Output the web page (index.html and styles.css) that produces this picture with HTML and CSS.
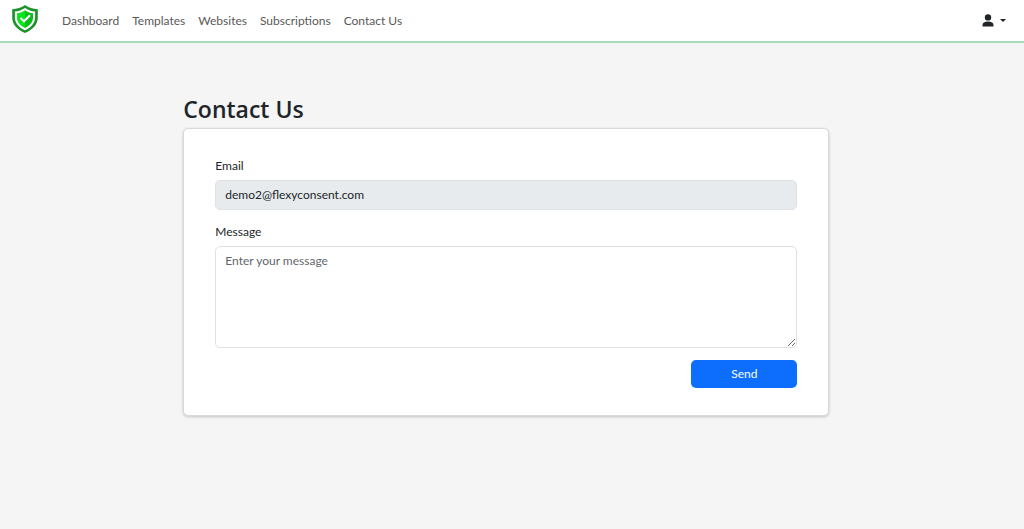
FILE: index.html
```html
<!DOCTYPE html>
<html lang="en">
<head>
<meta charset="utf-8">
<meta name="viewport" content="width=device-width, initial-scale=1">
<title>Contact Us</title>
<link rel="stylesheet" href="styles.css">
</head>
<body>
<header class="navbar">
  <a class="brand" href="#" aria-label="Home">
    <svg class="logo" viewBox="0 0 28 30" aria-hidden="true">
      <path d="M14 1C10.500 3.700 6 5 1.200 5.200V13.500C1.200 20.500 6.500 26 14 29C21.500 26 26.800 20.500 26.800 13.500V5.200C22 5 17.500 3.700 14 1Z" fill="#1d922b"/>
      <path d="M14 4C11 6 7.500 7.200 3.900 7.600V13.500C3.900 19 8 23.600 14 26.200C20 23.600 24.100 19 24.100 13.500V7.600C20.500 7.200 17 6 14 4Z" fill="#fff"/>
      <path d="M14 6.200C11.500 7.900 9 8.900 6 9.300V13.500C6 18 9 21.700 14 24Z" fill="#08e51b"/>
      <path d="M14 6.200C16.500 7.900 19 8.900 22 9.300V13.500C22 18 19 21.700 14 24Z" fill="#08bd19"/>
      <path d="M9.500 14L13 17.300L19 11.300" fill="none" stroke="#fff" stroke-width="2"/>
    </svg>
  </a>
  <nav class="nav-links" aria-label="Main">
    <a href="#">Dashboard</a>
    <a href="#">Templates</a>
    <a href="#">Websites</a>
    <a href="#">Subscriptions</a>
    <a href="#">Contact Us</a>
  </nav>
  <button class="account" type="button" aria-label="Account menu">
    <svg class="person" viewBox="0 0 12 13" aria-hidden="true">
      <circle cx="6" cy="3.400" r="3.200"/>
      <path d="M.5 12.500V11C.5 8.800 2.500 7.600 6 7.600S11.500 8.800 11.500 11V12.500Z"/>
    </svg>
    <span class="caret"></span>
  </button>
</header>
<main class="content">
  <h1 class="title">Contact Us</h1>
  <form class="card">
    <div class="field">
      <label for="email">Email</label>
      <input class="control" id="email" type="email" value="demo2@flexyconsent.com" readonly>
    </div>
    <div class="field">
      <label for="message">Message</label>
      <textarea class="control message" id="message" placeholder="Enter your message"></textarea>
    </div>
    <button class="send" type="button">Send</button>
  </form>
</main>
</body>
</html>
```
FILE: styles.css
```css
* {
  box-sizing: border-box;
}

body {
  margin: 0;
  background: #f5f5f5;
  color: #212529;
  font-family: "Segoe UI", Lato, sans-serif;
  font-size: 12px;
  line-height: 20px;
}

.navbar {
  display: flex;
  align-items: center;
  min-height: 43px;
  padding: 0 18px 4px 11px;
  background: #fff;
  border-bottom: 2px solid #a9dbb8;
}

.brand,
.logo {
  display: block;
}

.logo {
  width: 28px;
  height: 30px;
}

.nav-links {
  display: flex;
  flex-wrap: wrap;
  gap: 13px;
  margin-left: 23px;
  padding-top: 4px;
}

.nav-links a {
  color: #595959;
  text-decoration: none;
}

.account {
  display: flex;
  align-items: center;
  gap: 6px;
  margin-left: auto;
  padding: 4px 0 0;
  border: 0;
  background: none;
  color: #212529;
}

.person {
  width: 12px;
  height: 13px;
  fill: currentColor;
}

.caret {
  border: 3px solid transparent;
  border-top-color: currentColor;
  border-bottom: 0;
}

.content {
  width: 63.1%;
  margin-left: 17.9%;
  padding: 51px 0 32px;
}

.title {
  margin: 0 0 4px;
  font-family: "Segoe UI", "Open Sans", sans-serif;
  font-size: 23px;
  font-weight: 600;
  line-height: 30px;
}

.card {
  display: flex;
  flex-direction: column;
  gap: 12px;
  padding: 27px 31px;
  background: #fff;
  border: 1px solid #d9d9d9;
  border-radius: 5px;
  box-shadow: 0 1px 3px rgba(0, 0, 0, 0.2);
}

.field {
  display: flex;
  flex-direction: column;
  gap: 4px;
}

.control {
  display: block;
  width: 100%;
  padding: 4px 9px;
  border: 1px solid #dee2e6;
  border-radius: 5px;
  background: #fff;
  color: #212529;
  font: inherit;
}

.control:read-only {
  background: #e7ebee;
}

.control::placeholder {
  color: #62676c;
}

.message {
  height: 102px;
  resize: vertical;
}

.send {
  align-self: flex-end;
  width: 106px;
  padding: 4px 12px;
  border: 0;
  border-radius: 5px;
  background: #0d6efd;
  color: #fff;
  font: inherit;
}
```
